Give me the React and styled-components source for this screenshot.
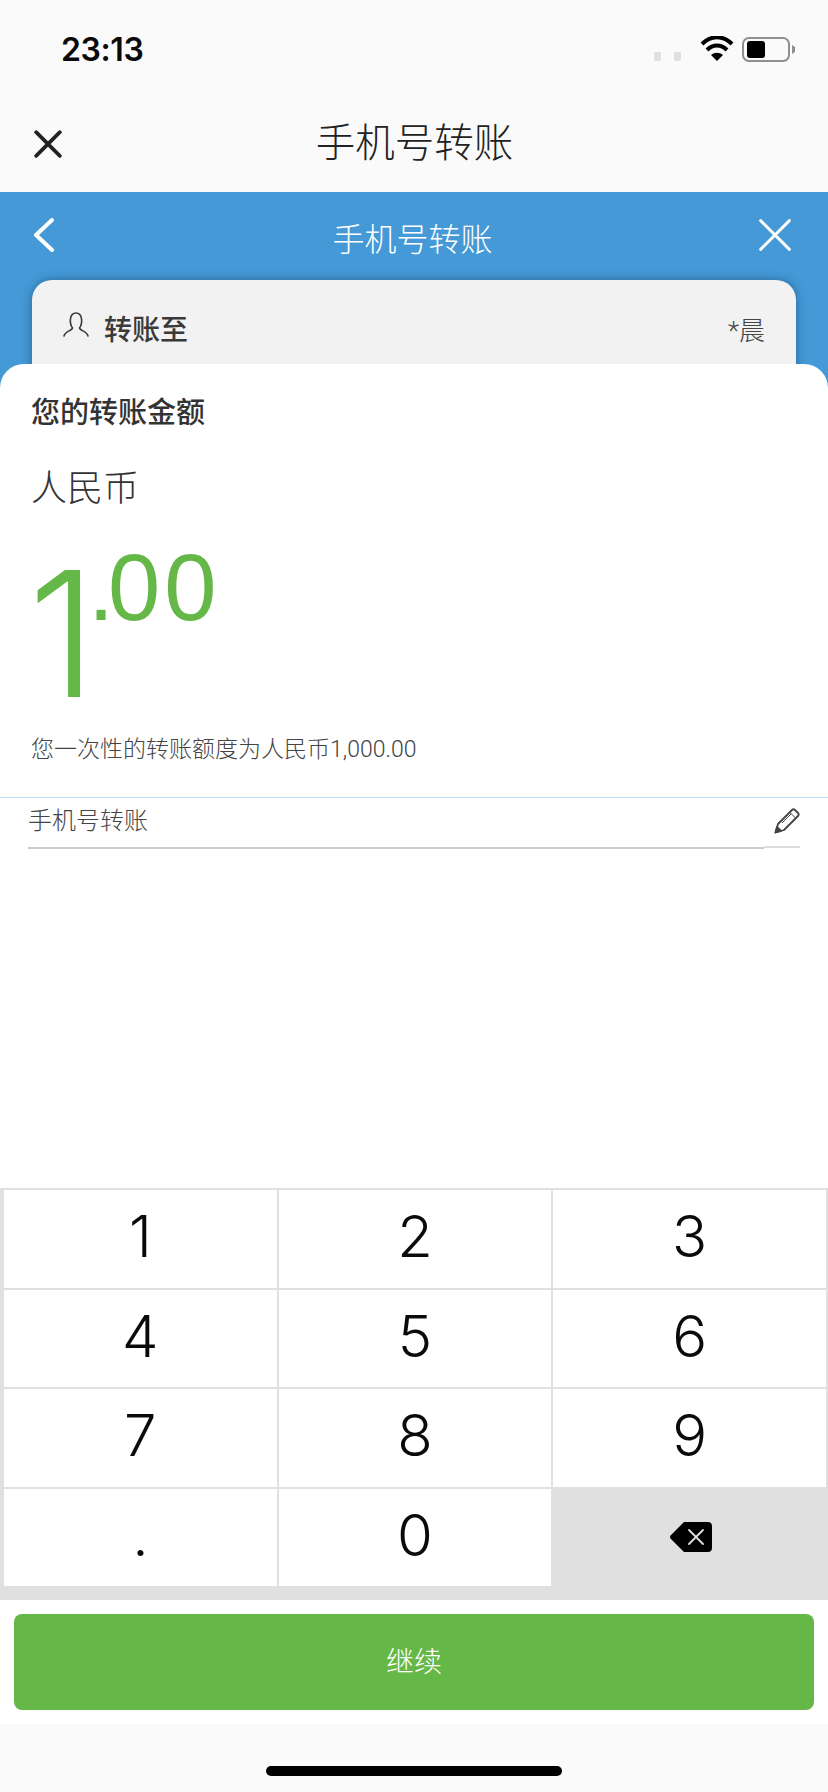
import React from "react";
import styled, { createGlobalStyle } from "styled-components";

const CJK = `Roboto, "Noto Sans CJK SC", sans-serif`;

const GlobalStyle = createGlobalStyle`
  html, body {
    margin: 0;
    padding: 0;
    background: #fff;
  }
  * {
    box-sizing: border-box;
  }
`;

const Page = styled.div`
  width: 828px;
  height: 1792px;
  display: flex;
  flex-direction: column;
  overflow: hidden;
  font-family: ${CJK};
  background: #fafafa;
`;

const StatusBar = styled.div`
  height: 96px;
  flex: none;
  display: flex;
  align-items: flex-start;
  justify-content: space-between;
  padding: 31px 32px 0 61px;
`;

const Time = styled.div`
  font-family: Inter, sans-serif;
  font-weight: 600;
  font-size: 32px;
  line-height: 38px;
  letter-spacing: -0.4px;
  color: #0a0a0a;
`;

const StatusIcons = styled.div`
  display: flex;
  align-items: flex-start;
  padding-top: 5px;
`;

const NavBar = styled.div`
  height: 96px;
  flex: none;
  display: grid;
  grid-template-columns: 1fr auto 1fr;
  align-items: center;
  padding: 0 33px 0 34px;
`;

const NavTitle = styled.div`
  font-weight: 300;
  font-size: 39.5px;
  line-height: 48px;
  color: #222;
`;

const BlueSection = styled.div`
  height: 196px;
  flex: none;
  background: #4499d6;
  overflow: hidden;
`;

const BlueHeader = styled.div`
  height: 88px;
  display: grid;
  grid-template-columns: 1fr auto 1fr;
  align-items: center;
  padding: 8px 36px 0 33px;
`;

const BlueTitle = styled.div`
  font-weight: 300;
  font-size: 32px;
  line-height: 40px;
  color: #fff;
`;

const EndIcon = styled.div`
  display: flex;
  justify-content: flex-end;
  margin-top: -10px;
`;

const StartIcon = styled.div`
  display: flex;
`;

const BackSlot = styled(StartIcon)`
  margin-top: -11px;
`;

const RecipientCard = styled.div`
  margin: 0 32px;
  height: 130px;
  border-radius: 20px 20px 0 0;
  background: #f2f2f2;
  box-shadow: 0 0 10px rgba(20, 60, 100, 0.55);
  display: flex;
  align-items: flex-start;
  justify-content: space-between;
  padding: 32px 31px 0 31px;
`;

const RecipientLabel = styled.div`
  display: flex;
  align-items: center;
  gap: 15px;
  font-weight: 500;
  font-size: 28px;
  line-height: 38px;
  color: #3a3a3a;
`;

const PersonSlot = styled.span`
  display: flex;
  margin-top: -12px;
`;

const RecipientName = styled.div`
  font-weight: 300;
  font-size: 26px;
  line-height: 38px;
  color: #444;
`;

const Sheet = styled.div`
  position: relative;
  flex: 1;
  margin-top: -24px;
  background: #fff;
  border-radius: 24px 24px 0 0;
  padding-top: 29px;
`;

const AmountBlock = styled.div`
  padding: 0 31px;
`;

const AmountTitle = styled.div`
  font-weight: 500;
  font-size: 29px;
  line-height: 40px;
  color: #333;
`;

const Currency = styled.div`
  margin-top: 31px;
  font-weight: 300;
  font-size: 36px;
  line-height: 50px;
  color: #333;
`;

const Amount = styled.div`
  display: flex;
  align-items: flex-start;
  margin-top: 28px;
  color: #65b848;
`;

const AmountWhole = styled.span`
  font-family: Inter, sans-serif;
  font-weight: 300;
  font-size: 175px;
  line-height: 176px;
  margin: 3px 0 0 -3px;
  letter-spacing: -9px;
`;

const AmountCents = styled.span`
  font-family: "Liberation Sans", sans-serif;
  font-size: 94px;
  line-height: 92px;
  letter-spacing: 4px;
`;

const CentsPoint = styled.span`
  letter-spacing: -6px;
`;

const LimitNote = styled.div`
  margin-top: 14px;
  font-weight: 300;
  font-size: 23px;
  line-height: 30px;
  color: #444;
`;

const Divider = styled.div`
  height: 1px;
  margin-top: 32px;
  background: #bfe2f6;
`;

const NoteField = styled.div`
  margin: 0 28px;
  display: flex;
  align-items: flex-start;
`;

const NoteText = styled.div`
  flex: 1;
  height: 51px;
  padding-bottom: 8px;
  display: flex;
  align-items: center;
  border-bottom: 2px solid #ccc;
  font-weight: 300;
  font-size: 24px;
  color: #444;
`;

const PencilCell = styled.div`
  width: 36px;
  height: 50px;
  padding-top: 10px;
  display: flex;
  justify-content: flex-end;
  border-bottom: 2px solid #ddd;
`;

const Keypad = styled.div`
  height: 412px;
  flex: none;
  display: grid;
  grid-template-columns: repeat(3, 1fr);
  grid-auto-rows: 97.5px;
  gap: 2px;
  padding: 2px 2px 14px 4px;
  background: #e0e0e0;
`;

const Key = styled.div`
  display: flex;
  align-items: center;
  justify-content: center;
  padding-bottom: ${(p) => (p.$muted ? "0" : "5px")};
  padding-left: ${(p) => (p.$muted ? "3px" : "0")};
  background: ${(p) => (p.$muted ? "transparent" : "#fff")};
  font-family: Inter, sans-serif;
  font-weight: 300;
  font-size: 58px;
  color: #0a0a0a;
`;

const Footer = styled.div`
  height: 124px;
  flex: none;
  padding: 14px;
  background: #fff;
`;

const ContinueButton = styled.div`
  height: 96px;
  padding-bottom: 4px;
  border-radius: 8px;
  background: #65b848;
  display: flex;
  align-items: center;
  justify-content: center;
  font-weight: 300;
  font-size: 28px;
  color: #fff;
`;

const HomeArea = styled.div`
  height: 68px;
  flex: none;
  display: flex;
  justify-content: center;
  padding-top: 42px;
`;

const HomeBar = styled.div`
  width: 296px;
  height: 10px;
  border-radius: 5px;
  background: #000;
`;

const StatusGlyphs = () => (
  <svg width="142" height="32" viewBox="653 36 142 32">
    <rect x="653" y="52" width="7" height="9" rx="1.5" fill="#e0e0e0" />
    <rect x="673" y="52" width="7" height="9" rx="1.5" fill="#e0e0e0" />
    <g fill="none" stroke="#000" strokeWidth="4">
      <path d="M701 44 C710 35 722 35 731 44" />
      <path d="M706 50 C712 44 720 44 726 50" />
    </g>
    <path d="M710 55 C714 52 718 52 722 55 L716 61 Z" fill="#000" />
    <rect x="742" y="38" width="46" height="23" rx="6" fill="none" stroke="#8f8f8f" strokeWidth="2" />
    <rect x="746" y="41" width="18" height="17" rx="3" fill="#000" />
    <path d="M791 45 L794 47 V52 L791 54 Z" fill="#8f8f8f" />
  </svg>
);

const CloseIcon = ({ size, color, width }) => (
  <svg width={size} height={size} viewBox="0 0 26 26" fill="none" stroke={color} strokeWidth={width} strokeLinecap="round">
    <path d="M2 2 L24 24 M24 2 L2 24" />
  </svg>
);

const BackIcon = () => (
  <svg width="22" height="34" viewBox="0 0 22 34" fill="none" stroke="#fff" strokeWidth="4" strokeLinecap="round" strokeLinejoin="round">
    <path d="M19 2 L3 17 L19 32" />
  </svg>
);

const PersonIcon = () => (
  <svg width="26" height="26" viewBox="0 0 26 26" fill="none" stroke="#3a3a3a" strokeWidth="1.6" strokeLinecap="round">
    <path d="M1 24 C2 19 9 19 9.5 16 C6 11 6.5 1 13 1 C19.5 1 20 11 16.5 16 C17 19 24 19 25 24" />
  </svg>
);

const PencilIcon = () => (
  <svg width="26" height="26" viewBox="0 0 26 26" fill="none" stroke="#444" strokeWidth="1.8" strokeLinejoin="round">
    <path d="M1.5 24.5 L4 16 L18 2 C19 1 20 1 21 2 L24 5 C25 6 25 7 24 8 L10 22 Z" />
    <path d="M16 4.5 L21.5 10 M8 15 L17 6" strokeWidth="1" />
    <path d="M1.5 24.5 L3 19 L7 23 Z" fill="#444" />
  </svg>
);

const BackspaceIcon = () => (
  <svg width="42" height="30" viewBox="0 0 42 30">
    <path d="M14 0 H38 C40.5 0 42 1.5 42 4 V26 C42 28.5 40.5 30 38 30 H14 L1 17 C-0.3 15.7 -0.3 14.3 1 13 Z" fill="#000" />
    <path d="M19 8 L33 22 M33 8 L19 22" stroke="#e0e0e0" strokeWidth="1.8" strokeLinecap="round" />
  </svg>
);

const keys = ["1", "2", "3", "4", "5", "6", "7", "8", "9", ".", "0"];

export default function App() {
  return (
    <Page>
      <GlobalStyle />
      <StatusBar>
        <Time>23:13</Time>
        <StatusIcons>
          <StatusGlyphs />
        </StatusIcons>
      </StatusBar>
      <NavBar>
        <StartIcon>
          <CloseIcon size={28} color="#222" width={3.4} />
        </StartIcon>
        <NavTitle>手机号转账</NavTitle>
        <div />
      </NavBar>
      <BlueSection>
        <BlueHeader>
          <BackSlot>
            <BackIcon />
          </BackSlot>
          <BlueTitle>手机号转账</BlueTitle>
          <EndIcon>
            <CloseIcon size={34} color="#fff" width={2.2} />
          </EndIcon>
        </BlueHeader>
        <RecipientCard>
          <RecipientLabel>
            <PersonSlot>
              <PersonIcon />
            </PersonSlot>
            转账至
          </RecipientLabel>
          <RecipientName>*晨</RecipientName>
        </RecipientCard>
      </BlueSection>
      <Sheet>
        <AmountBlock>
          <AmountTitle>您的转账金额</AmountTitle>
          <Currency>人民币</Currency>
          <Amount>
            <AmountWhole>1</AmountWhole>
            <AmountCents>
              <CentsPoint>.</CentsPoint>00
            </AmountCents>
          </Amount>
          <LimitNote>您一次性的转账额度为人民币1,000.00</LimitNote>
        </AmountBlock>
        <Divider />
        <NoteField>
          <NoteText>手机号转账</NoteText>
          <PencilCell>
            <PencilIcon />
          </PencilCell>
        </NoteField>
      </Sheet>
      <Keypad>
        {keys.map((k) => (
          <Key key={k}>{k}</Key>
        ))}
        <Key $muted>
          <BackspaceIcon />
        </Key>
      </Keypad>
      <Footer>
        <ContinueButton>继续</ContinueButton>
      </Footer>
      <HomeArea>
        <HomeBar />
      </HomeArea>
    </Page>
  );
}
